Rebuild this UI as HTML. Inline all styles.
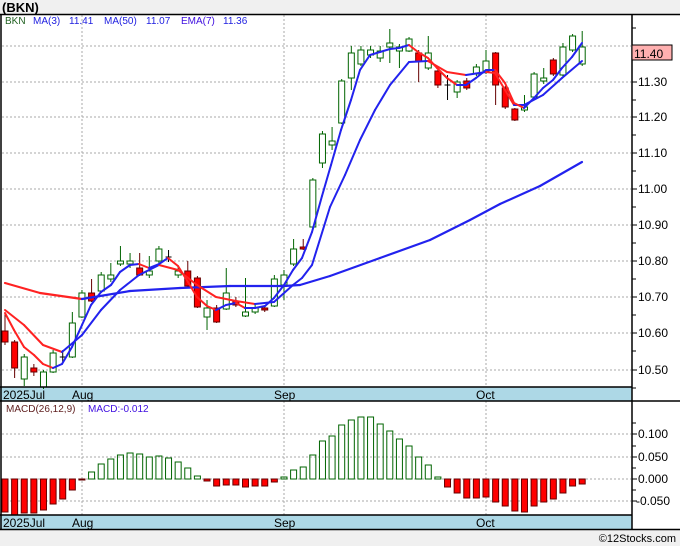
<!DOCTYPE html>
<html><head><meta charset="utf-8"><style>
html,body{margin:0;padding:0;background:#f0f0f0;width:680px;height:546px;overflow:hidden;font-family:"Liberation Sans",sans-serif}
svg{position:absolute;left:0;top:0}
</style></head><body>
<svg id="s" width="680" height="546" xmlns="http://www.w3.org/2000/svg" font-family="Liberation Sans, sans-serif">
<rect x="0" y="0" width="680" height="546" fill="#f0f0f0"/>
<text x="2" y="12" font-size="13" font-weight="bold" fill="#000">(BKN)</text>
<rect x="0" y="14" width="680" height="516" fill="#fff"/>
<rect x="0" y="387" width="632" height="14" fill="#add8e6"/>
<rect x="0" y="515" width="632" height="15" fill="#add8e6"/>
<g id="grid" stroke="#aaa" stroke-width="1" stroke-dasharray="2,2"></g>
<g id="c"></g>
<g fill="none" stroke="#000" stroke-width="1.5">
<line x1="0" y1="14.5" x2="680" y2="14.5"/>
<line x1="0" y1="387" x2="632" y2="387"/>
<line x1="0" y1="401" x2="680" y2="401"/>
<line x1="0" y1="515" x2="632" y2="515"/>
<line x1="0" y1="529.5" x2="680" y2="529.5"/>
<line x1="1" y1="14" x2="1" y2="530"/>
<line x1="632" y1="14" x2="632" y2="530"/>
</g>
<g font-size="12" fill="#000">
<text x="3" y="399">2025Jul</text><text x="72" y="399">Aug</text><text x="274" y="399">Sep</text><text x="476" y="399">Oct</text>
<text x="3" y="527">2025Jul</text><text x="72" y="527">Aug</text><text x="274" y="527">Sep</text><text x="476" y="527">Oct</text>
</g>
<g font-size="10">
<text x="5" y="24" fill="#206020">BKN</text>
<text x="33" y="24" fill="#2020e0">MA(3)</text><text x="69" y="24" fill="#2020e0">11.41</text>
<text x="104" y="24" fill="#2020e0">MA(50)</text><text x="146" y="24" fill="#2020e0">11.07</text>
<text x="181" y="24" fill="#4010e0">EMA(7)</text><text x="223" y="24" fill="#2020e0">11.36</text>
<text x="6" y="412" fill="#602020">MACD(26,12,9)</text>
<text x="88" y="412" fill="#4010e0">MACD:-0.012</text>
</g>
<g id="ax" font-size="12" fill="#000"></g>
<text x="676" y="542" font-size="11" text-anchor="end" fill="#000">©12Stocks.com</text>
</svg>
<script>
var NS="http://www.w3.org/2000/svg",c=document.getElementById('c'),g=document.getElementById('grid'),ax=document.getElementById('ax');
function el(p,t,a){var e=document.createElementNS(NS,t);for(var k in a)e.setAttribute(k,a[k]);p.appendChild(e);return e;}
[46,82,117,153,189,225,261,297,333,370].forEach(function(y){el(g,'line',{x1:2,y1:y,x2:631,y2:y});});
[434,457,479,501].forEach(function(y){el(g,'line',{x1:2,y1:y,x2:631,y2:y});});
[82,284,486].forEach(function(x){el(g,'line',{x1:x,y1:15,x2:x,y2:387});el(g,'line',{x1:x,y1:401,x2:x,y2:515});});
var lab=[["11.30",82],["11.20",117],["11.10",153],["11.00",189],["10.90",225],["10.80",261],["10.70",297],["10.60",333],["10.50",370]];
lab.forEach(function(l){el(ax,'line',{x1:632,y1:l[1],x2:637,y2:l[1],stroke:'#000'});el(ax,'line',{x1:632,y1:l[1]+18,x2:636,y2:l[1]+18,stroke:'#000'});var t=el(ax,'text',{x:638,y:l[1]+4});t.textContent=l[0];});
el(ax,'line',{x1:632,y1:28,x2:636,y2:28,stroke:'#000'});
[["0.100",434],["0.050",457],["0.000",479],["-0.050",501]].forEach(function(l){el(ax,'line',{x1:632,y1:l[1],x2:637,y2:l[1],stroke:'#000'});el(ax,'line',{x1:632,y1:l[1]-11,x2:636,y2:l[1]-11,stroke:'#000'});var t=el(ax,'text',{x:l[0][0]=='-'?636:638,y:l[1]+4});t.textContent=l[0];});
el(ax,'rect',{x:632,y:45,width:40,height:15,fill:'#ffb0b0',stroke:'#000'});
var tt=el(ax,'text',{x:634,y:58});tt.textContent="11.40";
var m=[512,515,513,513,510,504,499,490,480,472,464,459,455,453,454,457,456,458,462,468,476,481,486,485,485,487,486,486,482,477,470,467,455,441,436,425,420,417,417,424,431,439,446,457,465,477,487,493,498,498,497,502,506,511,512,506,502,499,493,486,484];
m.forEach(function(v,i){var x=5+9.62*i;if(v<479)el(c,'rect',{x:x-3,y:v,width:6,height:479-v,fill:'none',stroke:'#006400'});else el(c,'rect',{x:x-3,y:479,width:6,height:Math.max(1,v-479),fill:'#f00',stroke:'#600'});});
var k=[[331,342,313,345,0],[342,368,340,378,0],[357,379,354,386,1],[368,372,364,376,0],[372,387,370,389,1],[353,372,350,373,1],[356,358,350,362,2],[323,357,312,358,1],[293,317,290,318,1],[293,301,279,302,0],[275,291,272,293,1],[275,279,263,282,1],[261,264,246,266,1],[261,264,253,268,1],[268,275,253,276,0],[271,275,256,278,1],[249,261,246,263,1],[256,258,250,262,2],[271,275,266,278,1],[271,286,261,288,0],[278,307,276,308,0],[308,317,300,330,1],[308,322,305,323,0],[293,309,268,310,1],[301,305,297,307,0],[312,316,278,317,1],[308,312,303,314,1],[308,310,306,312,0],[279,306,275,307,1],[275,285,270,300,1],[249,264,239,266,1],[247,249,239,250,0],[180,227,178,228,1],[134,163,131,168,1],[141,145,127,150,1],[81,123,79,124,1],[53,78,46,90,1],[50,64,46,66,1],[50,55,46,58,1],[51,58,46,62,1],[43,47,29,63,1],[47,51,44,68,1],[39,51,37,52,1],[53,61,50,82,0],[53,68,36,70,1],[71,85,70,88,0],[84,86,75,100,2],[82,92,80,98,1],[81,88,78,90,0],[67,74,64,76,1],[61,71,50,74,1],[53,85,52,105,0],[88,107,86,109,0],[109,120,108,121,0],[107,110,95,112,1],[74,97,72,98,1],[78,81,68,84,1],[60,74,58,76,0],[47,75,43,77,1],[36,50,34,52,1],[47,64,31,66,1]];
k.forEach(function(d,i){var x=5+9.62*i;var col=d[4]==1?'#006400':(d[4]==0?'#600':'#000');
el(c,'line',{x1:x,y1:d[2],x2:x,y2:d[3],stroke:col});
if(d[4]==2){el(c,'line',{x1:x-3,y1:d[0]+1,x2:x+3,y2:d[0]+1,stroke:'#000'});return;}
el(c,'rect',{x:x-3,y:d[0],width:6,height:d[1]-d[0],fill:d[4]==1?'#fff':'#f00',stroke:col});});
function line(pts,w){for(var i=1;i<pts.length;i++){var a=pts[i-1],b=pts[i];el(c,'line',{x1:a[0],y1:a[1],x2:b[0],y2:b[1],stroke:b[1]>a[1]+0.3?'#f22':'#22e','stroke-width':w,'stroke-linecap':'round'});}}
line([[5,283],[40,293],[82,299],[130,291],[180,288],[230,286],[284,286],[300,285],[330,276],[380,258],[430,240],[470,220],[500,204],[540,186],[582,162]],2.2);
line([[5,310],[24,325],[43,345],[62,352],[82,335],[101,310],[120,290],[139,275],[159,265],[178,270],[197,285],[216,297],[236,301],[255,304],[274,302],[293,285],[302,278],[312,265],[330,207],[345,175],[360,140],[375,110],[390,85],[409,62],[428,61],[447,72],[466,75],[486,72],[495,73],[505,90],[514,105],[524,105],[543,95],[562,78],[582,61]],2);
line([[5,313],[14,330],[24,347],[34,355],[43,364],[53,368],[62,364],[72,347],[82,325],[91,305],[101,292],[111,285],[120,272],[130,265],[139,264],[149,268],[159,264],[168,258],[178,266],[188,282],[197,297],[207,306],[216,310],[226,305],[236,303],[245,308],[255,308],[265,306],[274,298],[284,285],[293,270],[302,258],[312,232],[322,196],[331,165],[341,130],[351,100],[360,70],[370,55],[380,52],[390,49],[399,48],[409,45],[418,52],[428,58],[437,68],[447,78],[457,85],[466,85],[476,78],[486,70],[495,70],[505,83],[514,103],[524,108],[534,98],[543,88],[553,80],[562,68],[572,57],[582,43]],2);
</script>
</body></html>
